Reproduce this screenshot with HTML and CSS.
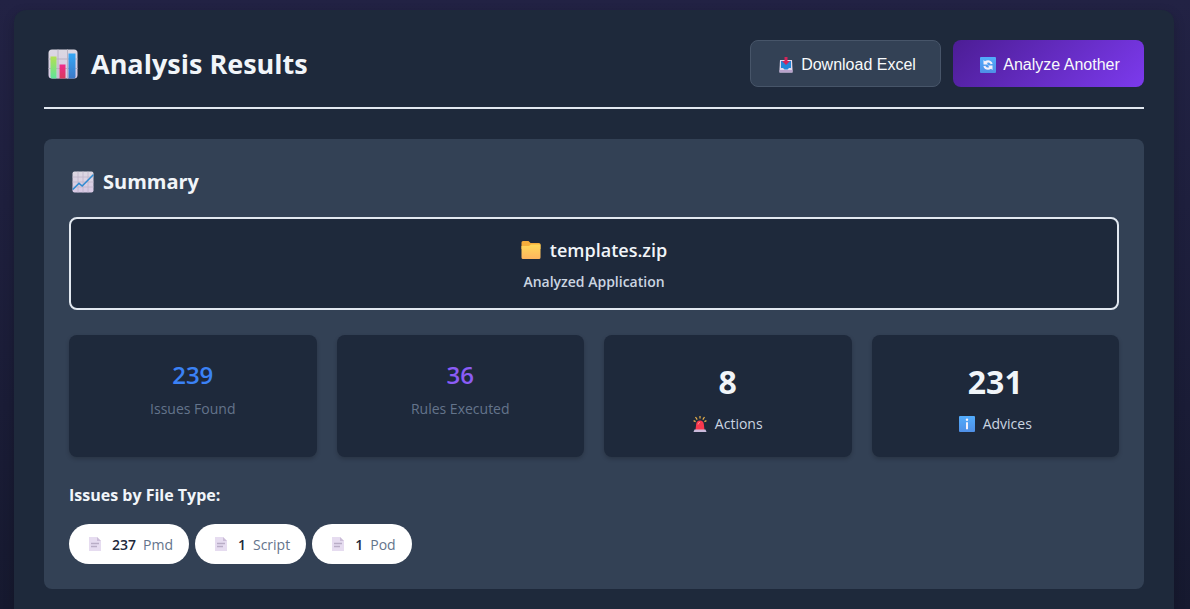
FILE: index.html
```html
<!DOCTYPE html>
<html lang="en">
<head>
<meta charset="utf-8">
<meta name="viewport" content="width=device-width, initial-scale=1">
<title>Analysis Results</title>
<link rel="stylesheet" href="styles.css">
</head>
<body>
<svg class="defs" aria-hidden="true">
  <defs>
    <linearGradient id="paper" x1="0" y1="0" x2="0" y2="1"><stop offset="0" stop-color="#dcd8e2"/><stop offset="1" stop-color="#d8c8e4"/></linearGradient>
    <linearGradient id="green" x1="0" y1="0" x2="0" y2="1"><stop offset="0" stop-color="#b4e052"/><stop offset="1" stop-color="#5fe39a"/></linearGradient>
    <linearGradient id="pink" x1="0" y1="0" x2="0" y2="1"><stop offset="0" stop-color="#f02c8c"/><stop offset="1" stop-color="#d83a5c"/></linearGradient>
    <linearGradient id="blue" x1="0" y1="0" x2="0" y2="1"><stop offset="0" stop-color="#35a8f5"/><stop offset="1" stop-color="#3d78c8"/></linearGradient>
    <linearGradient id="tile" x1="0" y1="0" x2="0" y2="1"><stop offset="0" stop-color="#52acfc"/><stop offset="1" stop-color="#4f8fe6"/></linearGradient>
    <linearGradient id="folder" x1="0" y1="0" x2="0" y2="1"><stop offset="0" stop-color="#ffd95a"/><stop offset="1" stop-color="#ffb45e"/></linearGradient>
    <symbol id="doc" viewBox="0 0 12 14">
      <path d="M0 0h8l4 4v10H0z" fill="#e6dcf0"/><path d="M8 0v4h4z" fill="#cbbdd8"/>
      <path d="M2 6.500h8M2 9.500h6" stroke="#b9adc6" stroke-width="1.300"/>
    </symbol>
  </defs>
</svg>
<main class="container">
  <header class="header">
    <h1 class="title">
      <svg class="icon-title" viewBox="0 0 30 30" aria-hidden="true">
        <rect x=".5" y=".5" width="29" height="29" rx="3.500" fill="url(#paper)"/>
        <path d="M.5 10h29M.5 19.500h29M10 .5v29M19.500 .5v29" stroke="#b9b2c2"/>
        <path d="M2.500 7.500h6V29.500H4a2 2 0 0 1-1.500-1.500z" fill="url(#green)"/>
        <path d="M11.500 15.500h6v14h-6z" fill="url(#pink)"/>
        <path d="M20.500 4.500h7V28a2 2 0 0 1-1.500 1.500h-5.500z" fill="url(#blue)"/>
      </svg>
      Analysis Results
    </h1>
    <div class="actions">
      <button class="btn btn-secondary" type="button">
        <svg class="icon-button" viewBox="0 0 16 16" aria-hidden="true">
          <path d="M2 3h12l.5 9v3.500h-13V12z" fill="#e2d9ec"/>
          <path d="M1.500 13h13v2.500h-13z" fill="#b9a3cc"/>
          <path d="M3 4h10v7h-2l-1.500 1.500h-3L5 11H3z" fill="#2386d8"/>
          <path d="M6.500 0h3v4H12L8 8 4 4h2.500z" fill="#d2255b"/>
        </svg>
        Download Excel
      </button>
      <button class="btn btn-primary" type="button">
        <svg class="icon-button" viewBox="0 0 16 16" aria-hidden="true">
          <rect width="16" height="16" rx="1" fill="url(#tile)"/>
          <path d="M3.500 7.500V3l1.400 1.300C7.600 2.200 11.600 3.200 12.700 6.800l-2 .4C9.800 5.200 8 5 6.700 6L8.200 7.500zM12.500 8.500V13l-1.400-1.300C8.400 13.800 4.400 12.800 3.300 9.200l2-.4c.9 2 2.700 2.200 4 1.200L7.800 8.500z" fill="#f4f0fb"/>
        </svg>
        Analyze Another
      </button>
    </div>
  </header>

  <section class="summary">
    <h2 class="summary-title">
      <svg class="icon-heading" viewBox="0 0 22 22" aria-hidden="true">
        <rect x=".5" y=".5" width="21" height="21" rx="2" fill="url(#paper)"/>
        <path d="M.5 6h21M.5 11h21M.5 16h21M6 .5v21M11 .5v21M16 .5v21" stroke="#bfb5ca" stroke-width=".8"/>
        <path d="M.8 18.500 7 12.300l3.200 2.700L21.300 3.800" fill="none" stroke="#2f8bd2" stroke-width="1.600"/>
      </svg>
      Summary
    </h2>
    <div class="app">
      <div class="app-name">
        <svg class="icon-folder" viewBox="0 0 20 18" aria-hidden="true">
          <path d="M.5 1.500Q.5 0 2 0h5.500l2 2H18q1.500 0 1.500 1.500V8H.5z" fill="#f5ad3c"/>
          <path d="M.5 5H8l2-1.500h9.500v13q0 1.500-1.500 1.500H2Q.5 18 .5 16.500z" fill="url(#folder)"/>
        </svg>
        templates.zip
      </div>
      <div class="app-label">Analyzed Application</div>
    </div>
    <div class="stats">
      <div class="stat"><div class="value value-blue">239</div><div class="label">Issues Found</div></div>
      <div class="stat"><div class="value value-purple">36</div><div class="label">Rules Executed</div></div>
      <div class="stat">
        <div class="value-large">8</div>
        <div class="label-light">
          <svg class="icon-siren" viewBox="0 0 14 16" aria-hidden="true">
            <path d="M7 0v2.600M2.500 1l1.700 2.600M11.500 1 9.800 3.600M.6 4.600l2 1M13.400 4.600l-2 1" stroke="#e9b24a" stroke-width="1.200"/>
            <path d="M2.500 14 3.200 8Q3.600 4.500 7 4.500T10.800 8l.7 6z" fill="#f8384e"/><path d="M5 8.500Q5.300 6.500 7 6.200" fill="none" stroke="#ff8b86"/>
            <path d="M1.500 13.500h11l1 2.500H.5z" fill="#cbbbdc"/>
          </svg>
          Actions
        </div>
      </div>
      <div class="stat">
        <div class="value-large">231</div>
        <div class="label-light">
          <svg class="icon-button" viewBox="0 0 16 16" aria-hidden="true">
            <rect width="16" height="16" rx="1" fill="url(#tile)"/>
            <circle cx="8" cy="3.800" r="1.200" fill="#f4f0fb"/><path d="M7 6.200h2v7H7z" fill="#f4f0fb"/>
          </svg>
          Advices
        </div>
      </div>
    </div>
    <h3 class="types-title">Issues by File Type:</h3>
    <ul class="types">
      <li class="pill"><svg class="icon-doc" aria-hidden="true"><use href="#doc"/></svg><strong class="count">237</strong>Pmd</li>
      <li class="pill"><svg class="icon-doc" aria-hidden="true"><use href="#doc"/></svg><strong class="count">1</strong>Script</li>
      <li class="pill"><svg class="icon-doc" aria-hidden="true"><use href="#doc"/></svg><strong class="count">1</strong>Pod</li>
    </ul>
  </section>
</main>
</body>
</html>
```

FILE: styles.css
```css
* {
  box-sizing: border-box;
}

body {
  display: flex;
  flex-direction: column;
  min-height: 100vh;
  margin: 0;
  padding: 10px 16px 0 14px;
  background: linear-gradient(180deg, #222244 0%, #16192f 100%);
  color: #f1f5f9;
  font-family: "Segoe UI", "Open Sans", "Noto Sans", sans-serif;
}

h1, h2, h3, ul {
  margin: 0;
}

.defs {
  position: absolute;
  width: 0;
  height: 0;
}

.container {
  flex: 1;
  padding: 30px 30px 20px;
  border-radius: 12px 12px 0 0;
  background: #1e293b;
  box-shadow: 0 4px 12px rgba(0, 0, 0, 0.2);
}

.header {
  display: flex;
  align-items: center;
  justify-content: space-between;
  gap: 20px;
  margin-bottom: 30px;
  padding-bottom: 20px;
  border-bottom: 2px solid #e2e8f0;
}

.title {
  display: flex;
  align-items: center;
  gap: 13px;
  padding-left: 4px;
  font-size: 27px;
  font-weight: 700;
  line-height: 40px;
}

.actions {
  display: flex;
  gap: 12px;
}

.btn {
  display: flex;
  align-items: center;
  justify-content: center;
  gap: 7px;
  width: 191px;
  height: 47px;
  padding: 2px 0 0 3px;
  border: 0;
  border-radius: 8px;
  color: #f8fafc;
  font-family: "Liberation Sans", Arial, sans-serif;
  font-size: 16px;
}

.btn-secondary {
  border: 1px solid #475569;
  background: #334155;
}

.btn-primary {
  background: linear-gradient(135deg, #4c1d95 0%, #7c3aed 100%);
}

.icon-title {
  width: 30px;
  height: 30px;
}

.icon-button {
  width: 16px;
  height: 16px;
}

.icon-siren {
  width: 14px;
  height: 16px;
}

.icon-heading {
  width: 22px;
  height: 22px;
}

.icon-folder {
  width: 20px;
  height: 18px;
}

.icon-doc {
  width: 12px;
  height: 14px;
  margin-right: 11px;
}

.summary {
  padding: 25px;
  border-radius: 8px;
  background: #334155;
}

.summary-title {
  display: flex;
  align-items: center;
  gap: 9px;
  margin-bottom: 18px;
  padding-left: 3px;
  font-size: 20px;
  font-weight: 700;
  line-height: 35px;
}

.app {
  margin-bottom: 25px;
  padding: 15px;
  border: 2px solid #e2e8f0;
  border-radius: 8px;
  background: #1e293b;
  text-align: center;
}

.app-name {
  display: flex;
  align-items: center;
  justify-content: center;
  gap: 9px;
  margin-bottom: 4px;
  font-size: 18px;
  font-weight: 600;
  line-height: 32px;
}

.app-label {
  color: #cbd5e1;
  font-size: 14px;
  font-weight: 600;
  line-height: 23px;
}

.stats {
  display: grid;
  grid-template-columns: repeat(4, 1fr);
  gap: 20px;
  margin-bottom: 25px;
}

.stat {
  min-height: 122px;
  padding: 20px;
  border-radius: 8px;
  background: #1e293b;
  box-shadow: 0 2px 4px rgba(0, 0, 0, 0.2);
  text-align: center;
}

.value {
  margin-bottom: 2px;
  font-size: 24px;
  font-weight: 600;
  line-height: 40px;
}

.value-blue {
  color: #3b82f6;
}

.value-purple {
  color: #8b5cf6;
}

.label {
  color: #64748b;
  font-size: 14px;
  font-weight: 500;
  line-height: 24px;
}

.value-large {
  margin-bottom: 4px;
  font-size: 32px;
  font-weight: 700;
  line-height: 54px;
}

.label-light {
  display: flex;
  align-items: center;
  justify-content: center;
  gap: 8px;
  color: #cbd5e1;
  font-size: 14px;
  line-height: 22px;
}

.types-title {
  margin-bottom: 15px;
  font-size: 16px;
  font-weight: 700;
  line-height: 27px;
}

.types {
  display: flex;
  flex-wrap: wrap;
  gap: 6px;
  padding: 0;
  list-style: none;
}

.pill {
  display: flex;
  align-items: center;
  height: 40px;
  padding: 0 16px 0 20px;
  border-radius: 20px;
  background: #ffffff;
  color: #64748b;
  font-size: 14px;
}

.count {
  margin-right: 7px;
  color: #1e293b;
  font-weight: 600;
}
```
